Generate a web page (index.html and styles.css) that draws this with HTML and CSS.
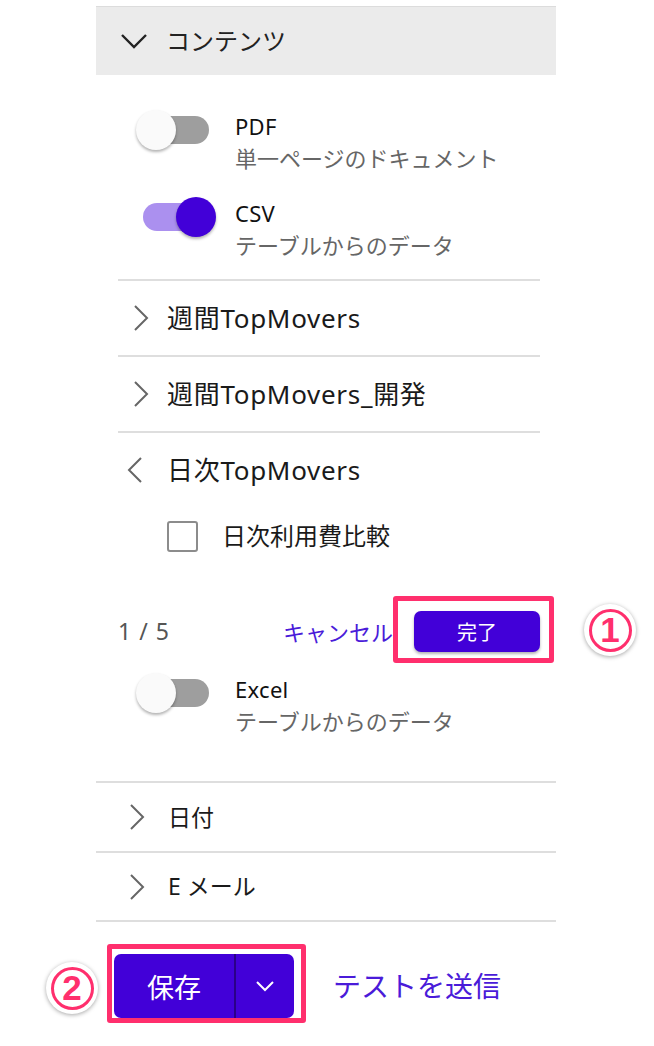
FILE: index.html
```html
<!DOCTYPE html>
<html lang="ja">
<head>
<meta charset="utf-8">
<link rel="stylesheet" href="styles.css">
</head>
<body>
<div class="page">
  <div class="panel">
    <div class="section-head">
      <svg class="chev-down" width="28" height="16" viewBox="0 0 28 16"><path d="M2 2 L14 14 L26 2" fill="none" stroke="#222" stroke-width="2.4"/></svg>
      <span class="head-title">コンテンツ</span>
    </div>
    <div class="content">
      <div class="toggle-item first">
        <div class="toggle"><span class="track"></span><span class="thumb"></span></div>
        <div class="toggle-text">
          <div class="t-label">PDF</div>
          <div class="t-sub">単一ページのドキュメント</div>
        </div>
      </div>
      <div class="toggle-item second">
        <div class="toggle on"><span class="track"></span><span class="thumb"></span></div>
        <div class="toggle-text">
          <div class="t-label">CSV</div>
          <div class="t-sub">テーブルからのデータ</div>
        </div>
      </div>
      <div class="group">
        <div class="row bordered">
          <svg class="chev" width="24" height="26" viewBox="0 0 24 26"><path d="M9 1 L21 13 L9 25" fill="none" stroke="#666" stroke-width="2"/></svg>
          <span class="row-title">週間TopMovers</span>
        </div>
        <div class="row bordered">
          <svg class="chev" width="24" height="26" viewBox="0 0 24 26"><path d="M9 1 L21 13 L9 25" fill="none" stroke="#666" stroke-width="2"/></svg>
          <span class="row-title">週間TopMovers_開発</span>
        </div>
        <div class="row bordered">
          <svg class="chev" width="24" height="26" viewBox="0 0 24 26"><path d="M15 1 L3 13 L15 25" fill="none" stroke="#666" stroke-width="2"/></svg>
          <span class="row-title">日次TopMovers</span>
        </div>
        <div class="check-row">
          <span class="checkbox"></span>
          <span class="check-label">日次利用費比較</span>
        </div>
      </div>
      <div class="footer-row">
        <span class="pager">1 / 5</span>
        <div class="footer-actions">
          <span class="link cancel">キャンセル</span>
          <div class="done-wrap">
            <span class="btn done">完了</span>
            <span class="hl hl-done"></span>
          </div>
        </div>
      </div>
      <div class="toggle-item third">
        <div class="toggle"><span class="track"></span><span class="thumb"></span></div>
        <div class="toggle-text">
          <div class="t-label">Excel</div>
          <div class="t-sub">テーブルからのデータ</div>
        </div>
      </div>
    </div>
    <div class="outer-rows">
      <div class="orow">
        <svg class="chev" width="24" height="26" viewBox="0 0 24 26"><path d="M7 1 L19 13 L7 25" fill="none" stroke="#666" stroke-width="2"/></svg>
        <span class="orow-title">日付</span>
      </div>
      <div class="orow">
        <svg class="chev" width="24" height="26" viewBox="0 0 24 26"><path d="M7 1 L19 13 L7 25" fill="none" stroke="#666" stroke-width="2"/></svg>
        <span class="orow-title">E メール</span>
      </div>
    </div>
  </div>
  <div class="save-area">
    <div class="save-wrap">
      <div class="save-btn">
        <span class="save-main">保存</span>
        <span class="save-split">
          <svg width="20" height="12" viewBox="0 0 20 12"><path d="M2 2 L10 10 L18 2" fill="none" stroke="#fff" stroke-width="2"/></svg>
        </span>
      </div>
      <span class="hl hl-save"></span>
    </div>
    <span class="link test">テストを送信</span>
  </div>
  <div class="badge badge-1"><span class="ring">1</span></div>
  <div class="badge badge-2"><span class="ring">2</span></div>
</div>
</body>
</html>
```

FILE: styles.css
```css
* { box-sizing: border-box; }
html, body { margin: 0; padding: 0; background: #fff; }
body {
  font-family: "Noto Sans", "Noto Sans CJK JP", sans-serif;
  color: #1a1a1a;
}
.page {
  position: relative;
  width: 654px;
  height: 1046px;
  padding-top: 6px;
  overflow: hidden;
}
.panel {
  margin-left: 96px;
  width: 460px;
}
.section-head {
  height: 69px;
  border-top: 1px solid #dcdcdc;
  background: #ebebeb;
  display: flex;
  align-items: center;
  padding-left: 24px;
}
.chev-down { margin-right: 18px; margin-top: -1px; }
.head-title { font-size: 24px; color: #222; line-height: 1; }

.content { padding: 0 16px 0 22px; }

.toggle-item { display: flex; align-items: flex-start; }
.toggle-item.first { margin-top: 35px; }
.toggle-item.second { margin-top: 23px; }
.toggle-item.third { margin-top: 0; }
.toggle {
  position: relative;
  width: 80px;
  height: 40px;
  margin-left: 18px;
  margin-right: 19px;
  margin-top: 0;
  flex: none;
}
.track {
  position: absolute;
  left: 7px; right: 7px; top: 6px;
  height: 28px;
  border-radius: 14px;
  background: #9e9e9e;
}
.thumb {
  position: absolute;
  left: 0; top: 0;
  width: 40px; height: 40px;
  border-radius: 50%;
  background: #fafafa;
  box-shadow: 0 2px 3px rgba(0,0,0,0.3);
}
.toggle.on .track { background: #ab90ef; }
.toggle.on .thumb { left: auto; right: 0; background: #4200d8; }
.t-label { font-size: 22px; line-height: 32px; color: #111; letter-spacing: 0.3px; }
.t-sub { font-size: 22px; line-height: 32px; color: #666; }

.group { margin-top: 18px; }
.row {
  height: 76px;
  display: flex;
  align-items: center;
  padding-left: 8px;
}
.row.bordered { border-top: 2px solid #dedede; }
.row .chev { margin-right: 17px; flex: none; }
.row-title { font-size: 26px; color: #1a1a1a; line-height: 1; letter-spacing: 0.7px; }

.check-row {
  height: 58px;
  display: flex;
  align-items: center;
  padding-left: 49px;
}
.checkbox {
  width: 31px; height: 31px;
  border: 2px solid #8c8c8c;
  border-radius: 3px;
  margin-right: 24px;
  flex: none;
}
.check-label { font-size: 24px; color: #1a1a1a; line-height: 1; }

.footer-row {
  display: flex;
  align-items: center;
  justify-content: space-between;
  padding-top: 46px;
  padding-bottom: 21px;
}
.pager { font-size: 23px; color: #555; letter-spacing: 1px; line-height: 1; }
.footer-actions { display: flex; align-items: center; }
.link { color: #4a1bd9; }
.cancel { font-size: 22px; margin-right: 21px; line-height: 1; }
.done-wrap { position: relative; }
.btn.done {
  display: flex;
  align-items: center;
  justify-content: center;
  width: 126px; height: 41px;
  background: #4200d8;
  color: #fff;
  border-radius: 7px;
  font-size: 20px;
  box-shadow: 0 2px 3px rgba(0,0,0,0.3);
}
.hl {
  position: absolute;
  border: 5px solid #ff2f6d;
  border-radius: 3px;
  pointer-events: none;
}
.hl-done { left: -21px; right: -14px; top: -15px; bottom: -11px; }

.outer-rows { margin-top: 44px; }
.orow {
  height: 70px;
  border-top: 2px solid #dedede;
  display: flex;
  align-items: center;
  padding-left: 28px;
}
.orow:last-child { border-bottom: 2px solid #dedede; height: 71px; }
.orow .chev { margin-right: 20px; flex: none; }
.orow-title { font-size: 23px; color: #1a1a1a; line-height: 1; }

.save-area {
  display: flex;
  align-items: center;
  margin-top: 32px;
  padding-left: 114px;
}
.save-wrap { position: relative; }
.save-btn {
  display: flex;
  width: 180px; height: 64px;
  background: #4200d8;
  border-radius: 7px;
  overflow: hidden;
}
.save-main {
  width: 122px;
  display: flex;
  align-items: center;
  justify-content: center;
  color: #fff;
  font-size: 27px;
  border-right: 2px solid #2a0088;
}
.save-split {
  flex: 1;
  display: flex;
  align-items: center;
  justify-content: center;
}
.hl-save { left: -7px; right: -12px; top: -10px; bottom: -5px; }
.test { font-size: 28px; margin-left: 39px; line-height: 1; }

.badge {
  position: absolute;
  width: 52px; height: 52px;
  border-radius: 50%;
  background: #fff;
  box-shadow: 0 1px 4px rgba(0,0,0,0.35);
  display: flex;
  align-items: center;
  justify-content: center;
}
.badge-1 { left: 584px; top: 604px; }
.badge-2 { left: 46px; top: 962px; }
.ring {
  width: 43px; height: 43px;
  border-radius: 50%;
  border: 3.5px solid #ff2f6d;
  color: #ff2f6d;
  font-family: "Liberation Sans", "Noto Sans", sans-serif;
  font-weight: 700;
  font-size: 35px;
  line-height: 36px;
  text-align: center;
}
```
